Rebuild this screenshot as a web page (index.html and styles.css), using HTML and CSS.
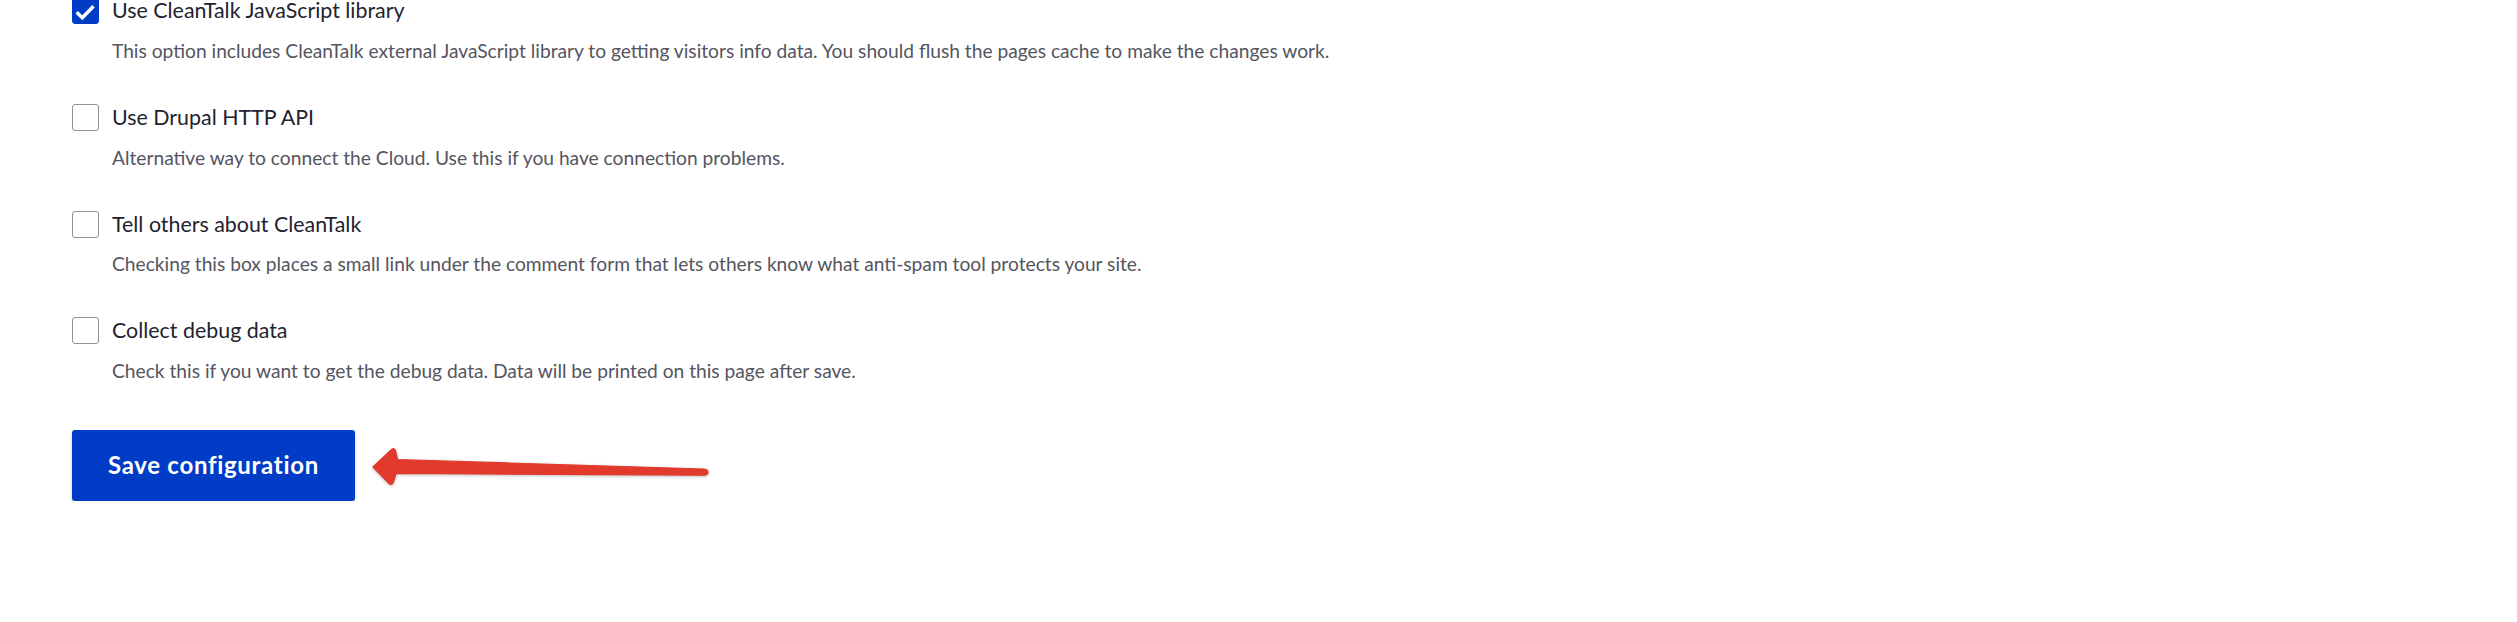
FILE: index.html
```html
<!DOCTYPE html>
<html>
<head>
<meta charset="utf-8">
<title>CleanTalk settings</title>
<link rel="stylesheet" href="styles.css">
</head>
<body>
<form class="form">
  <div class="items">
    <div class="item">
      <div class="option">
        <span class="checkbox checkbox--checked">
          <svg class="check" viewBox="0 0 27 27" width="27" height="27"><path d="M4.7 15.2 L10.3 20.8 L21.5 9.2" fill="none" stroke="#fff" stroke-width="3.4" stroke-linecap="butt" stroke-linejoin="miter"/></svg>
        </span>
        <span class="label">Use CleanTalk JavaScript library</span>
      </div>
      <div class="desc">This option includes CleanTalk external JavaScript library to getting visitors info data. You should flush the pages cache to make the changes work.</div>
    </div>
    <div class="item">
      <div class="option">
        <span class="checkbox"></span>
        <span class="label">Use Drupal HTTP API</span>
      </div>
      <div class="desc">Alternative way to connect the Cloud. Use this if you have connection problems.</div>
    </div>
    <div class="item">
      <div class="option">
        <span class="checkbox"></span>
        <span class="label">Tell others about CleanTalk</span>
      </div>
      <div class="desc">Checking this box places a small link under the comment form that lets others know what anti-spam tool protects your site.</div>
    </div>
    <div class="item">
      <div class="option">
        <span class="checkbox"></span>
        <span class="label">Collect debug data</span>
      </div>
      <div class="desc">Check this if you want to get the debug data. Data will be printed on this page after save.</div>
    </div>
  </div>
  <div class="actions">
    <button type="button" class="button">Save configuration</button>
  </div>
</form>
<svg class="arrow" width="2517" height="622" viewBox="0 0 2517 622">
  <path d="M373 467 L391.5 449.5 Q394.5 447.5 395.5 450.5 L397.5 459.5 L704 469 Q708 469.6 708 472.2 Q708 475 704 475.2 L396 473.5 L393.5 482 Q392 486 389 483.5 Z" fill="#e13a2d" stroke="#e13a2d" stroke-width="1.2" stroke-linejoin="round"/>
</svg>
</body>
</html>
```

FILE: styles.css
```css
html, body {
  margin: 0;
  padding: 0;
  background: #ffffff;
}

body {
  font-family: Lato, "Liberation Sans", sans-serif;
  color: #222330;
  overflow: hidden;
}

.form {
  padding-left: 72px;
  margin-top: -2.7px;
}

.items {
  display: flex;
  flex-direction: column;
  gap: 39px;
}

.item {
  display: flex;
  flex-direction: column;
}

.option {
  display: flex;
  align-items: center;
  height: 27px;
}

.checkbox {
  box-sizing: border-box;
  width: 27px;
  height: 27px;
  flex: 0 0 27px;
  border: 1.5px solid #8e929c;
  border-radius: 3px;
  background: #ffffff;
  position: relative;
}

.checkbox--checked {
  background: #003cc5;
  border-color: #003cc5;
}

.check {
  position: absolute;
  left: -1.5px;
  top: -1.5px;
  display: block;
}

.label {
  margin-left: 13px;
  font-size: 21.4px;
  line-height: 27px;
  color: #222330;
  white-space: nowrap;
}

.desc {
  margin: 12.65px 0 0 40px;
  font-size: 19.2px;
  line-height: 28px;
  color: #545560;
  white-space: nowrap;
}

.actions {
  margin-top: 45px;
  display: flex;
}

.button {
  font-family: Lato, "Liberation Sans", sans-serif;
  font-weight: 700;
  font-size: 24px;
  letter-spacing: 0.7px;
  line-height: 24px;
  padding: 23.5px 36px;
  color: #ffffff;
  background: #003cc5;
  border: 0;
  border-radius: 3px;
  box-shadow: 0 2px 3px rgba(30, 50, 90, 0.28);
  cursor: pointer;
}

.arrow {
  position: absolute;
  left: 0;
  top: 0;
  pointer-events: none;
  filter: drop-shadow(0 1px 1.5px rgba(0, 0, 0, 0.25));
}
```
